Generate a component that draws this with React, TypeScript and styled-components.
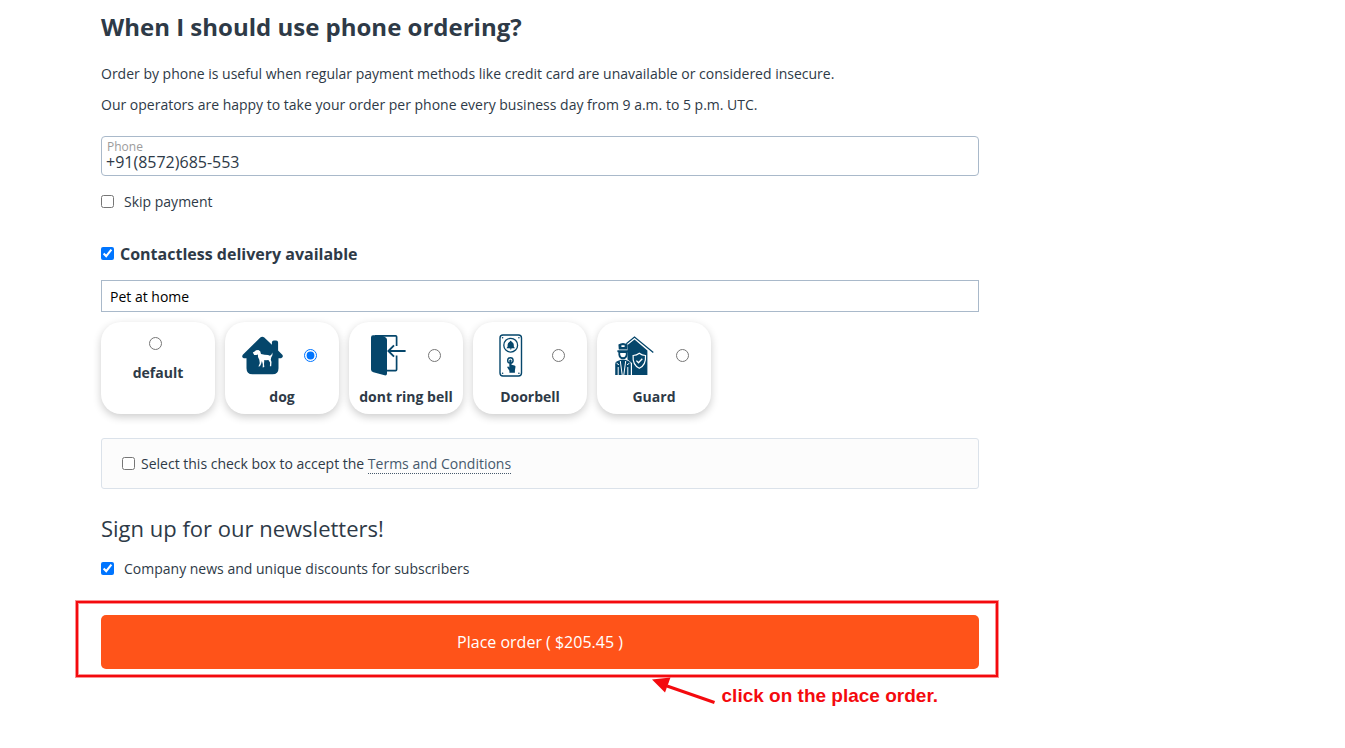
import React, { useState } from "react";
import styled, { createGlobalStyle } from "styled-components";

const GlobalStyle = createGlobalStyle`
  *, *::before, *::after { box-sizing: border-box; }
  body {
    margin: 0;
    background: #fff;
    color: #2e3a47;
    font-family: "Open Sans", "Noto Sans", sans-serif;
    font-size: 14px;
    line-height: 20px;
  }
`;

const Page = styled.main`
  padding: 10px 366px 60px 101px;
`;

const Title = styled.h1`
  margin: 0 0 19px;
  font-size: 24px;
  font-weight: 700;
  line-height: 34px;
`;

const Paragraph = styled.p`
  margin: 0 0 10px;
  line-height: 21px;
`;

const PhoneField = styled.div`
  display: flex;
  flex-direction: column;
  height: 40px;
  margin: 21px 0 16px;
  padding: 4px;
  border: 1px solid #a9b9ca;
  border-radius: 4px;
`;

const PhoneLabel = styled.label`
  padding-left: 1px;
  color: #9b9b9b;
  font-size: 12px;
  line-height: 12px;
`;

const PhoneInput = styled.input`
  width: 100%;
  height: 18px;
  padding: 0;
  border: 0;
  outline: 0;
  background: transparent;
  color: #2e3a47;
  font: inherit;
  font-size: 16px;
  line-height: 18px;
`;

const CheckRow = styled.label<{ $gap?: number }>`
  display: flex;
  align-items: center;
  gap: ${(p) => p.$gap ?? 10}px;
`;

const Checkbox = styled.input.attrs({ type: "checkbox" })`
  flex: none;
  width: 13px;
  height: 13px;
  margin: 0 0 2px;
`;

const Delivery = styled.section`
  margin: 32px 0 24px;
`;

const Strong = styled.span`
  font-size: 16px;
  font-weight: 700;
`;

const NoteInput = styled.input`
  display: block;
  width: 100%;
  height: 32px;
  margin: 16px 0 10px;
  padding: 0 8px;
  border: 1px solid #a9b9ca;
  outline: 0;
  color: #000;
  font: inherit;
`;

const Options = styled.div`
  display: flex;
  flex-wrap: wrap;
  gap: 10px;
`;

const OptionCard = styled.label`
  display: flex;
  flex-direction: column;
  gap: 9px;
  width: 114px;
  height: 92px;
  padding-top: 12px;
  border-radius: 20px;
  background: #fff;
  box-shadow: 0 3px 8px rgba(0, 0, 0, 0.2);
  font-weight: 700;
  text-align: center;
`;

const OptionTop = styled.span`
  display: flex;
  align-items: center;
  justify-content: center;
  gap: 18px;
  min-height: 20px;
`;

const Radio = styled.input.attrs({ type: "radio" })`
  flex: none;
  width: 13px;
  height: 13px;
  margin: 0 5px 2px 0;
`;

const Icon = styled.svg`
  flex: none;
  width: 44px;
  height: 44px;
  color: #05466b;
`;

const TermsBox = styled.div`
  padding: 15px 20px 14px;
  border: 1px solid #dbe2ea;
  border-radius: 3px;
  background: #fcfcfc;
`;

const TermsLink = styled.a`
  border-bottom: 1px dotted #46596c;
  color: #46596c;
  text-decoration: none;
`;

const Subtitle = styled.h2`
  margin: 24px 0 16px;
  font-size: 22px;
  font-weight: 400;
  line-height: 30px;
`;

const OrderArea = styled.div`
  position: relative;
  margin-top: 36px;
`;

const OrderButton = styled.button`
  display: block;
  width: 100%;
  height: 54px;
  border: 0;
  border-radius: 5px;
  background: #ff5319;
  color: #fff;
  font: inherit;
  font-size: 16px;
  font-weight: 500;
`;

const Highlight = styled.div`
  position: absolute;
  inset: -14px -19px -8px -25px;
  border: 2px solid #f40a0e;
  box-shadow: 0 0 0 1px rgba(244, 10, 14, 0.45), inset 0 0 0 1px rgba(244, 10, 14, 0.45);
  pointer-events: none;
`;

const Callout = styled.div`
  position: absolute;
  top: 61px;
  right: 41px;
  display: flex;
  align-items: flex-end;
  gap: 6px;
  color: #f40a0e;
  font-family: "Liberation Sans", Arial, sans-serif;
  font-size: 19px;
  font-weight: 700;
  white-space: nowrap;
  pointer-events: none;
`;

const Arrow = styled.svg`
  flex: none;
  width: 64px;
  height: 30px;
`;

const DogIcon = () => (
  <Icon viewBox="0 0 44 44" aria-hidden="true">
    <path
      fill="currentColor"
      d="M18.3 3.5q2-1.7 4 0l7.6 7.2V8.6q0-2 2-2h2.2q2 0 2 2v8l4.2 4.2q1.6 2.4-1.2 3.5h-2.6v10q0 6-6 6h-20q-6 0-6-6v-10H1.800q-2.600-1-1-3.500z"
    />
    <path
      fill="#fff"
      d="M10.800 18.400l1.800-.8 1.400-1.400 2.400-.2 1.800 1.200.8 2.700 3.600.9 3.400.1 1.900.9 1.500-1 .9-2.200.2 2.500-1.300 2.300-.4 2.300.7 2.400-.3 4.100h-1.300l.2-3.700-1.700-2.600-2.400.3-1.700-.1-.3 3.800.3 3.100-1.600.5.1-3.200-.9-3.400-.8 3-1.200 2.400-1.500.3 1.400-3.300-.5-3.500-1.300-2.700-.1-2.600-1.500.6-2.200-.1z"
    />
  </Icon>
);

const DoorIcon = () => (
  <Icon viewBox="0 0 44 44" aria-hidden="true">
    <path
      fill="currentColor"
      d="M7 1.300h6.500q5 1 6.500 2.400 1 .8 1 2.200v33.500q0 2.400-2.400 1.900L7.400 38.200Q5 37.500 5 35.400V3.400q0-2 2-2.100z"
    />
    <g fill="none" stroke="currentColor" strokeWidth="1.7">
      <path d="M9 1.800h20.600q1 0 1 1V12M30.600 21.400v14.200q0 1-1 1h-9" />
      <path d="M39.600 17H23M28 11.400L22.400 17l5.600 5.600" strokeWidth="1.9" />
    </g>
  </Icon>
);

const DoorbellIcon = () => (
  <Icon viewBox="0 0 44 44" aria-hidden="true">
    <rect x="10" y="1" width="21.5" height="41" rx="3" fill="none" stroke="currentColor" strokeWidth="1.4" />
    <circle cx="20.7" cy="11.2" r="6.9" fill="none" stroke="currentColor" strokeWidth="1.3" />
    <path
      fill="currentColor"
      d="M20.700 6.800q.8 0 .9.900 2.200.8 2.200 3.100v1.700l1.100 1.800h-8.400l1.100-1.800v-1.700q0-2.300 2.200-3.100.1-.9.9-.9zM19.700 14.500h2q-.2 1-1 1t-1-1z"
    />
    <circle cx="20.4" cy="26.4" r="2.7" fill="none" stroke="currentColor" strokeWidth="1.4" />
    <path
      fill="currentColor"
      d="M19.300 26.200q1.100-1.200 2.200 0v4.600l3 .7q1 .3 1 1.300l-.6 3.600v2.300h-5.500v-1.900l-2.100-3.400q-.1-1.200 1.100-.9l.9.900z"
    />
    <g fill="currentColor">
      <circle cx="12.6" cy="3.7" r=".8" />
      <circle cx="28.9" cy="3.7" r=".8" />
      <circle cx="12.6" cy="39.3" r=".8" />
      <circle cx="28.9" cy="39.3" r=".8" />
    </g>
  </Icon>
);

const GuardIcon = () => (
  <Icon viewBox="0 0 44 44" aria-hidden="true">
    <path fill="currentColor" d="M20.500 5.400l12.900 11v24.700H18V29l-4.500-3.500V11z" />
    <path fill="none" stroke="currentColor" strokeWidth="1.3" d="M12.300 9.800l8.200-6.800 18.800 15.400" />
    <path
      fill="currentColor"
      stroke="#fff"
      strokeWidth="1.2"
      d="M25.300 19.300q2.600 2.200 6.200 2.200.7 9.500-6.200 12.800-6.900-3.300-6.200-12.800 3.600 0 6.200-2.200z"
    />
    <path fill="none" stroke="#fff" strokeWidth="1.3" d="M22.400 26.600l2.100 2.200 3.800-4" />
    <path
      fill="currentColor"
      d="M4.400 10.400q4.600-3 9.200 0l-.4 5H4.800zM3.400 16.300h11.200v1.600l-1 .7v2.200q-.6 4.400-4.600 4.400t-4.600-4.400v-2.200l-1-.7z"
    />
    <path fill="#fff" d="M6.200 18.900h5.600v1.900Q11.300 23.300 9 23.300t-2.800-2.500zM7.400 11.300h3.200v1.800H7.400z" />
    <path fill="currentColor" d="M1.200 41.100V30q0-2.400 2.400-3l3.300-1.300h4.200l3.300 1.300q2.400.6 2.400 3v11.100z" />
    <path
      fill="none"
      stroke="#fff"
      strokeWidth="1"
      d="M4.200 33v8.100M13.800 33v8.100M6.300 27l1.900 14M11.700 27L9.800 41M2.600 29.200l2.300 1.600M15.400 29.200l-2.300 1.600"
    />
  </Icon>
);

const options = [
  { id: "default", label: "default", Picture: null },
  { id: "dog", label: "dog", Picture: DogIcon },
  { id: "no-bell", label: "dont ring bell", Picture: DoorIcon },
  { id: "doorbell", label: "Doorbell", Picture: DoorbellIcon },
  { id: "guard", label: "Guard", Picture: GuardIcon },
];

export default function App() {
  const [selected, setSelected] = useState("dog");

  return (
    <>
      <GlobalStyle />
      <Page>
        <Title>When I should use phone ordering?</Title>
        <Paragraph>
          Order by phone is useful when regular payment methods like credit card are unavailable or
          considered insecure.
        </Paragraph>
        <Paragraph>
          Our operators are happy to take your order per phone every business day from 9 a.m. to 5
          p.m. UTC.
        </Paragraph>

        <PhoneField>
          <PhoneLabel htmlFor="phone">Phone</PhoneLabel>
          <PhoneInput id="phone" type="tel" defaultValue="+91(8572)685-553" />
        </PhoneField>
        <CheckRow>
          <Checkbox />
          Skip payment
        </CheckRow>

        <Delivery>
          <CheckRow $gap={6}>
            <Checkbox defaultChecked />
            <Strong>Contactless delivery available</Strong>
          </CheckRow>
          <NoteInput type="text" aria-label="Delivery note" defaultValue="Pet at home" />
          <Options role="radiogroup" aria-label="Delivery option">
            {options.map(({ id, label, Picture }) => (
              <OptionCard key={id}>
                <OptionTop>
                  {Picture && <Picture />}
                  <Radio
                    name="delivery"
                    value={id}
                    checked={selected === id}
                    onChange={() => setSelected(id)}
                  />
                </OptionTop>
                {label}
              </OptionCard>
            ))}
          </Options>
        </Delivery>

        <TermsBox>
          <CheckRow $gap={6}>
            <Checkbox />
            <span>
              Select this check box to accept the <TermsLink href="#terms">Terms and Conditions</TermsLink>
            </span>
          </CheckRow>
        </TermsBox>

        <Subtitle>Sign up for our newsletters!</Subtitle>
        <CheckRow>
          <Checkbox defaultChecked />
          Company news and unique discounts for subscribers
        </CheckRow>

        <OrderArea>
          <OrderButton type="button">Place order ( $205.45 )</OrderButton>
          <Highlight />
          <Callout>
            <Arrow viewBox="0 0 64 30" aria-hidden="true">
              <path d="M15 10L62.500 26.500" stroke="currentColor" strokeWidth="3" />
              <path d="M0 3.500L18.500 1.500L13 16.500z" fill="currentColor" />
            </Arrow>
            click on the place order.
          </Callout>
        </OrderArea>
      </Page>
    </>
  );
}
